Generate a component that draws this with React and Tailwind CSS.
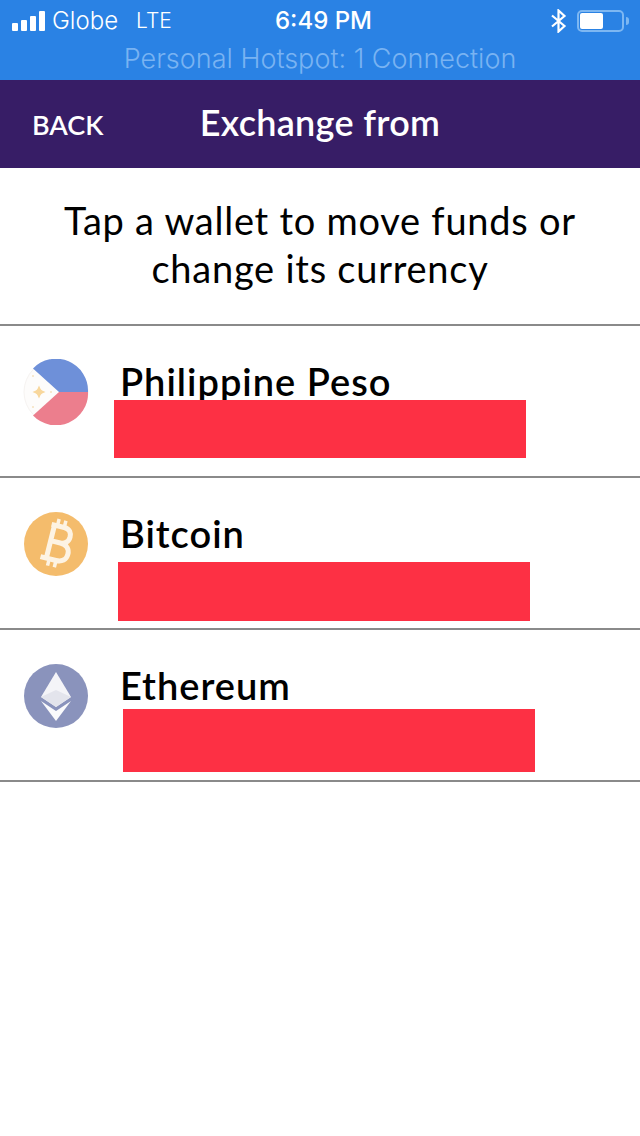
import React from 'react'

const wallets = [
  { name: 'Philippine Peso', icon: <PesoIcon />, bar: 'left-[114px] top-[74px] h-[58px]' },
  { name: 'Bitcoin', icon: <BitcoinIcon />, bar: 'left-[118px] top-[84px] h-[59px]' },
  { name: 'Ethereum', icon: <EtherIcon />, bar: 'left-[123px] top-[79px] h-[63px]' },
]

function PesoIcon() {
  return (
    <svg width="66" height="66" viewBox="0 0 66 66">
      <circle cx="33" cy="33" r="32" fill="#fdfcfb" stroke="#f6f3f1" />
      <path d="M10 9.500A32 32 0 0 1 65 33H36Z" fill="#6e90d9" />
      <path d="M10 56.500A32 32 0 0 0 65 33H36Z" fill="#ec7e8d" />
      <circle cx="16" cy="33" r="3" fill="#f8d79c" />
      <path d="M16 26.500L18 31L22.500 33L18 35L16 39.500L14 35L9.500 33L14 31Z" fill="#f8d79c" />
      <circle cx="10" cy="17" r="1" fill="#f4e2bf" />
      <circle cx="10" cy="48" r="1" fill="#f4e2bf" />
      <circle cx="28" cy="33" r="1" fill="#f4e2bf" />
    </svg>
  )
}

function BitcoinIcon() {
  return (
    <svg width="66" height="66" viewBox="0 0 66 66">
      <circle cx="33" cy="33" r="32" fill="#f4bc6c" />
      <g transform="rotate(14 33 33)" fill="none" stroke="#fdf3e3" strokeWidth="5">
        <path d="M24 15H37C43 15 45 19 45 23C45 28 41 31 37 31H27M37 31C44 31 47 35 47 40C47 46 43 49 37 49H21M27 15V49" />
        <path d="M30 8V15M37 8V15M30 49V56M37 49V56" strokeWidth="3.500" />
      </g>
    </svg>
  )
}

function EtherIcon() {
  return (
    <svg width="66" height="66" viewBox="0 0 66 66">
      <circle cx="33" cy="33" r="32" fill="#8a93bc" />
      <path d="M33 9L18 34L33 44L48 34Z" fill="#f4f4f8" />
      <path d="M18 34L33 27L48 34L33 44Z" fill="#e3e4ec" />
      <path d="M18 38L33 48L48 38L33 58Z" fill="#fafafc" />
    </svg>
  )
}

function StatusBar() {
  return (
    <div className="h-20 bg-[#2a82e4] text-white font-['Inter',sans-serif]">
      <div className="relative flex h-10 items-center justify-between pl-3 pr-[11px] pt-0.5">
        <div className="flex items-center">
          <div className="flex items-end gap-[3px]">
            <span className="h-2 w-[6px] rounded-[1px] bg-white" />
            <span className="h-[11px] w-[6px] rounded-[1px] bg-white" />
            <span className="h-[15px] w-[6px] rounded-[1px] bg-white" />
            <span className="h-5 w-[6px] rounded-[1px] bg-white" />
          </div>
          <span className="ml-[7px] text-[24px] font-light">Globe</span>
          <span className="ml-[18px] text-[21px] font-light">LTE</span>
        </div>
        <span className="absolute left-[275px] text-[24px] font-medium">6:49 PM</span>
        <div className="flex items-center">
          <svg width="17" height="24" viewBox="0 0 17 24" fill="none" stroke="white" strokeWidth="2.200">
            <path d="M2 6.500L14.500 17L8.500 22.500V1.500L14.500 7L2 17.500" />
          </svg>
          <div className="ml-[10px] flex h-[22px] w-[47px] items-center rounded-[5px] border-2 border-[#7db7f2] p-[1px]">
            <span className="h-4 w-[23px] rounded-[2px] bg-white" />
          </div>
          <span className="ml-0.5 h-2 w-[3px] rounded-r-sm bg-[#7db7f2]" />
        </div>
      </div>
      <p className="text-center text-[27px] font-light leading-[38px] text-[#79b3f2]">Personal Hotspot: 1 Connection</p>
    </div>
  )
}

export default function App() {
  return (
    <div className="min-h-[1136px] bg-white font-['Lato',sans-serif] text-black">
      <StatusBar />

      <div className="relative flex h-[88px] items-center justify-center bg-[#371d66] pb-1 text-white">
        <button className="absolute left-8 top-[25px] text-[27px] font-semibold">BACK</button>
        <h1 className="text-[36px] font-semibold tracking-[0.3px]">Exchange from</h1>
      </div>

      <p className="h-[158px] border-b-2 border-[#8a8a8a] px-10 pt-[28px] text-center text-[38px] leading-[48px] tracking-[0.75px]">
        Tap a wallet to move funds or change its currency
      </p>

      {wallets.map(wallet => (
        <div key={wallet.name} className="relative flex h-[152px] border-b-2 border-[#8a8a8a] pl-[23px]">
          <div className="pt-[33px]">{wallet.icon}</div>
          <div className="ml-[31px] pt-[33px] text-[38px] font-semibold leading-[44px] tracking-[1px]">{wallet.name}</div>
          <div className={`absolute w-[412px] bg-[#fd3044] ${wallet.bar}`} />
        </div>
      ))}
    </div>
  )
}
